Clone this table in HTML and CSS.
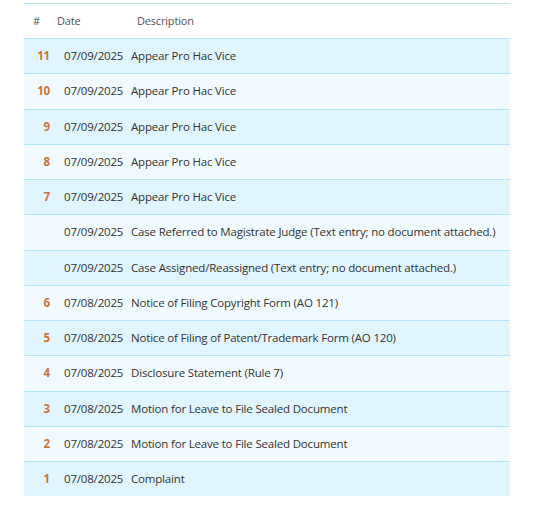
FILE: index.html
```html
<!DOCTYPE html>
<html>
<head>
<meta charset="utf-8">
<link rel="stylesheet" href="styles.css">
</head>
<body>
<div class="docket">
  <div class="head">
    <span>#</span>
    <span>Date</span>
    <span>Description</span>
  </div>
  <div class="row odd"><span class="num">11</span><span class="date">07/09/2025</span><span class="desc">Appear Pro Hac Vice</span></div>
  <div class="row even"><span class="num">10</span><span class="date">07/09/2025</span><span class="desc">Appear Pro Hac Vice</span></div>
  <div class="row odd"><span class="num">9</span><span class="date">07/09/2025</span><span class="desc">Appear Pro Hac Vice</span></div>
  <div class="row even"><span class="num">8</span><span class="date">07/09/2025</span><span class="desc">Appear Pro Hac Vice</span></div>
  <div class="row odd"><span class="num">7</span><span class="date">07/09/2025</span><span class="desc">Appear Pro Hac Vice</span></div>
  <div class="row even"><span class="num"></span><span class="date">07/09/2025</span><span class="desc">Case Referred to Magistrate Judge (Text entry; no document attached.)</span></div>
  <div class="row odd"><span class="num"></span><span class="date">07/09/2025</span><span class="desc">Case Assigned/Reassigned (Text entry; no document attached.)</span></div>
  <div class="row even"><span class="num">6</span><span class="date">07/08/2025</span><span class="desc">Notice of Filing Copyright Form (AO 121)</span></div>
  <div class="row odd"><span class="num">5</span><span class="date">07/08/2025</span><span class="desc">Notice of Filing of Patent/Trademark Form (AO 120)</span></div>
  <div class="row even"><span class="num">4</span><span class="date">07/08/2025</span><span class="desc">Disclosure Statement (Rule 7)</span></div>
  <div class="row odd"><span class="num">3</span><span class="date">07/08/2025</span><span class="desc">Motion for Leave to File Sealed Document</span></div>
  <div class="row even"><span class="num">2</span><span class="date">07/08/2025</span><span class="desc">Motion for Leave to File Sealed Document</span></div>
  <div class="row odd"><span class="num">1</span><span class="date">07/08/2025</span><span class="desc">Complaint</span></div>
</div>
</body>
</html>
```
FILE: styles.css
```css
html, body {
  margin: 0;
  padding: 0;
  background: #ffffff;
}
body {
  padding-top: 3px;
  font-family: "Open Sans", "Noto Sans", sans-serif;
  font-size: 11.5px;
  letter-spacing: -0.18px;
  color: #333333;
}
.docket {
  margin-left: 24px;
  width: 486px;
}
.head {
  display: grid;
  grid-template-columns: 24px 80px 1fr;
  padding-left: 9px;
  height: 34px;
  line-height: 34px;
  border-top: 1px solid #b3e5fc;
  color: #555555;
  font-size: 11px;
}
.row {
  display: grid;
  grid-template-columns: 26px 81px 1fr;
  height: 34.25px;
  line-height: 34.25px;
  border-top: 1px solid #b3e5fc;
  white-space: nowrap;
}
.odd {
  background: #e1f5fe;
}
.even {
  background: #f1fafe;
}
.num {
  text-align: right;
  font-weight: 700;
  color: #c8743a;
}
.date {
  padding-left: 14px;
}
```
